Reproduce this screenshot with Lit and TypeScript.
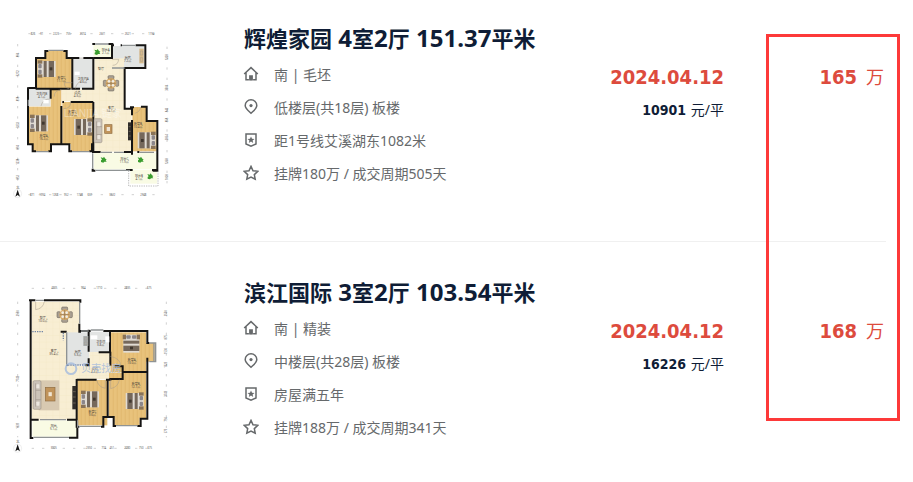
import { LitElement, html, svg, css } from "lit";
import { customElement, property } from "lit/decorators.js";

interface Listing {
  title: string;
  details: string[];
  date: string;
  unitPrice: string;
  price: string;
  plan: "large" | "small";
}

const listings: Listing[] = [
  {
    title: "辉煌家园 4室2厅 151.37平米",
    details: ["南 | 毛坯", "低楼层(共18层) 板楼", "距1号线艾溪湖东1082米", "挂牌180万 / 成交周期505天"],
    date: "2024.04.12",
    unitPrice: "10901",
    price: "165",
    plan: "large",
  },
  {
    title: "滨江国际 3室2厅 103.54平米",
    details: ["南 | 精装", "中楼层(共28层) 板楼", "房屋满五年", "挂牌188万 / 成交周期341天"],
    date: "2024.04.12",
    unitPrice: "16226",
    price: "168",
    plan: "small",
  },
];

/* Row icons, in order: house, pin, badge, star */
const icons = [
  svg`<path d="M1.2 8 8 1.6 14.8 8M3 6.8V13.8H5.9M13 6.8V13.8H10.1"/><path d="M6.7 14.4V9.8H9.3V14.4" stroke-width="1.2"/><path d="M8 10V14.4" stroke-width="2"/>`,
  svg`<path d="M8 14.3C5 11.4 2.2 9.3 2.2 6.4a5.8 5.6 0 0 1 11.6 0C13.8 9.3 11 11.4 8 14.3Z"/><circle cx="8" cy="6.6" r="1.6" fill="currentColor" stroke="none"/>`,
  svg`<path d="M3 2H13V12L8 14.2 3 12Z"/><path d="M8 4.4 9 6.7 11.5 6.9 9.6 8.5 10.2 11 8 9.6 5.8 11 6.4 8.5 4.5 6.9 7 6.7Z" fill="currentColor" stroke="none"/>`,
  svg`<path d="M8 1.4 10 5.7 14.8 6.3 11.3 9.6 12.2 14.2 8 12 3.8 14.2 4.7 9.6 1.2 6.3 6 5.7Z"/>`,
];

/* Floor-plan drawing pieces */
const rect = (x: number, y: number, w: number, h: number, c: string) =>
  svg`<rect class=${c} x=${x} y=${y} width=${w} height=${h}/>`;

const label = (x: number, y: number, name: string, area: string) => svg`
  <text class="label" x=${x} y=${y}>${name}</text>
  <text class="label" x=${x} y=${y + 9}>${area}</text>`;

const bed = (x: number, y: number, turn = 0) => svg`
  <g transform="translate(${x} ${y}) rotate(${turn})">
    <rect x="-27" y="-24" width="54" height="48" fill="#e0dbd3"/>
    <rect x="-27" y="-26" width="14" height="10" fill="#8a7357"/>
    <rect x="-27" y="16" width="14" height="10" fill="#8a7357"/>
    <rect x="-25" y="-15" width="10" height="13" rx="3" fill="#8b868a"/>
    <rect x="-25" y="2" width="10" height="13" rx="3" fill="#8b868a"/>
    <rect x="-9" y="-24" width="9" height="48" fill="#75685b"/>
    <rect x="6" y="-24" width="16" height="48" fill="#75685b"/>
    <rect x="9" y="-5" width="8" height="9" fill="#3f372f"/>
  </g>`;

const table = (x: number, y: number) => svg`
  <g transform="translate(${x} ${y})">
    ${[0, 90, 180, 270].map(
      (a) => svg`<rect transform="rotate(${a})" x="-9" y="-23" width="18" height="10" rx="3" fill="#aaa092" stroke="#5a554c" stroke-width="1.5"/>`,
    )}
    <circle r="16" fill="#d6aa69"/>
    <path d="M-14 0H14M0-14V14" stroke="#8f7656" stroke-width="2"/>
    <circle cx="-6" cy="-6" r="4" fill="#f1ede4"/><circle cx="6" cy="-6" r="4" fill="#f1ede4"/>
    <circle cx="-6" cy="6" r="4" fill="#f1ede4"/><circle cx="6" cy="6" r="4" fill="#f1ede4"/>
  </g>`;

const sofa = (x: number, y: number, h: number) => svg`
  <g transform="translate(${x} ${y})">
    <rect width="24" height=${h} rx="4" fill="#cbc3b8" stroke="#91877b" stroke-width="1.5"/>
    <path d="M8 8V${h - 8}M8 ${h / 3}H23M8 ${(h * 2) / 3}H23" stroke="#8d8378" stroke-width="1.5"/>
    <rect x="10" y="11" width="9" height="12" rx="2" fill="#ebe6de"/>
    <rect x="10" y=${h - 23} width="9" height="12" rx="2" fill="#ebe6de"/>
  </g>`;

const coffee = (x: number, y: number, w: number, h: number) => svg`
  <rect x=${x} y=${y} width=${w} height=${h} fill="#c0935a" stroke="#8f6d42" stroke-width="2"/>
  <rect x=${x + w / 2 - 5} y=${y + h / 2 - 6} width="10" height="12" fill="#f0e5d2"/>`;

const plant = (x: number, y: number) => svg`
  <path fill="#399c2e" transform="translate(${x} ${y})" d="M-9-7-2-5 1-9 5-3 9-1 6 2 9 6 2 6-1 9-8 7-8 2-5 0Z"/>`;

const compass = (y: number) => svg`
  <circle cx="53" cy=${y} r="12" fill="none" stroke="#dcdcdc" stroke-width="1.5"/>
  <path d="M53 ${y - 12} 60 ${y + 9} 53 ${y + 4} 46 ${y + 9}Z" fill="#151515"/>
  <text class="label" x="53" y=${y - 15}>北</text>`;

const across = (y: number, marks: [number, string][], from: number, to: number) => svg`
  <path class="rule" d="M${from} ${y}H${to}"/>
  ${marks.map(([x, t]) => svg`<text class="size" x=${x} y=${y + 3}>${t}</text>`)}`;

const down = (x: number, marks: [number, string][], from: number, to: number) => svg`
  <path class="rule" d="M${x} ${from}V${to}"/>
  ${marks.map(([y, t]) => svg`<text class="size" transform="translate(${x + 3} ${y}) rotate(-90)">${t}</text>`)}`;

const defs = svg`
  <defs>
    <pattern id="planks" width="24" height="60" patternUnits="userSpaceOnUse">
      <rect width="24" height="60" fill="#e8c27b"/>
      <path d="M4 0V60M16 0V60" stroke="#e3bb72" stroke-width="4"/>
    </pattern>
    <pattern id="tiles" width="20" height="20" patternUnits="userSpaceOnUse">
      <rect width="20" height="20" fill="#f8eed3"/>
      <path d="M0 0H20V20" fill="none" stroke="#f3e6c6" stroke-width="2"/>
    </pattern>
  </defs>`;

const largePlan = html`
  <svg class="plan" viewBox="0 0 570 570" role="img" aria-label="四室两厅户型图">
    ${defs}
    ${across(41, [[99, "826"], [125, "91"], [168, "2223"], [205, "755"], [248, "2074"], [307, "2221"], [383, "2621"], [454, "1194"]], 85, 470)}
    ${across(524, [[97, "871"], [127, "1994"], [166, "1268"], [199, "952"], [239, "1748"], [269, "637"], [337, "3622"], [430, "2748"]], 85, 470)}
    ${down(53, [[105, "894"], [160, "3272"], [237, "898"], [315, "3232"], [382, "894"], [425, "1238"], [472, "852"]], 72, 495)}
    ${down(501, [[112, "1228"], [203, "3504"], [270, "842"], [300, "858"], [352, "2864"], [424, "1268"], [472, "1008"]], 80, 495)}
    ${compass(521)}
    ${rect(110, 116, 107, 90, "wood")}${rect(137, 92, 62, 26, "wood")}
    ${rect(220, 115, 60, 92, "bath")}
    ${rect(280, 75, 56, 40, "balcony")}
    ${rect(338, 78, 94, 66, "bath")}
    ${rect(283, 115, 89, 280, "tile")}${rect(370, 267, 25, 128, "tile")}${rect(185, 208, 100, 36, "tile")}
    ${rect(87, 207, 64, 52, "bath")}
    ${rect(87, 260, 96, 112, "wood")}${rect(152, 208, 32, 54, "wood")}${rect(99, 370, 54, 24, "wood")}
    ${rect(187, 246, 93, 126, "wood")}${rect(212, 370, 62, 24, "wood")}
    ${rect(397, 302, 73, 92, "wood")}${rect(397, 261, 42, 42, "wood")}
    ${rect(281, 398, 190, 50, "balcony")}${rect(391, 450, 80, 41, "balcony")}
    <path class="wall" d="M108 208V114H136V93H145M190 93H200V114H238M250 114H280M217 114V206H240M108 206H212M85 204H108M84 202V373H98V394H108M145 394H153V373H208V394H216M268 394H276V373H281M152 206V236M153 208H180M184 258V373M187 246H192M212 246H280M280 112V206H246M280 246V398M277 72H285M325 72H340M336 74V114H281M336 76H342M362 76H366M407 76H436V144H374V266H396V286M390 262H402M423 260H440V303H472V452H458M396 300V396M276 396H302M372 396H396V404M412 396H418M278 446V452H286M378 450H398M456 450H473"/>
    <path class="window" d="M145 91H190M85 239V258M108 395H145M216 395H268M285 72H325M366 76H407M278 400V446M286 451H390M302 397H336M342 397H372M418 397H462M336 144H374"/>
    <path class="thin" d="M238 114H250M217 188H193Q192 204 208 206M246 182Q229 188 226 206M123 258Q128 236 151 237M163 230Q162 210 184 210M212 246Q213 266 190 266M336 118H356Q354 136 338 136M404 280Q421 276 422 260"/>
    <path class="dashed" d="M386 452V498H474V454"/>
    ${bed(140, 147)}${bed(117, 310)}${bed(249, 321, 180)}${bed(440, 361, 180)}
    ${table(333, 190)}${sofa(282, 296, 72)}${coffee(314, 314, 22, 26)}
    <rect x="384" y="307" width="10" height="54" fill="#302d2a"/>
    <path d="M386 320H392M386 334H392M386 348H392" stroke="#827566" stroke-width="2"/>
    <rect x="418" y="86" width="13" height="44" fill="#d6ba8b"/>
    <path d="M421 93H428V105H421ZM421 113H428V124H421Z" class="thin"/>
    <rect x="224" y="155" width="15" height="10" fill="#fff"/><rect x="130" y="240" width="16" height="10" fill="#fff"/>
    ${plant(292, 96)}${plant(311, 419)}${plant(422, 419)}${plant(451, 469)}
    ${label(184, 178, "卧室C", "11.1㎡")}${label(250, 181, "卫生间A", "4.6㎡")}
    ${label(317, 92, "阳台A", "2.1㎡")}${label(383, 116, "厨房", "7.2㎡")}
    ${label(303, 149, "餐厅", "")}${label(333, 267, "客厅", "34.1㎡")}
    ${label(232, 222, "过道", "4.3㎡")}${label(125, 226, "卫生间B", "4.1㎡")}
    ${label(217, 278, "卧室D", "13.2㎡")}${label(131, 350, "卧室A", "16.2㎡")}
    ${label(414, 316, "卧室B", "10.4㎡")}${label(373, 420, "阳台C", "11.9㎡")}${label(417, 472, "阳台B", "4.1㎡")}
    <text class="mark pale" x="278" y="292">LIANJIA.链家</text>
  </svg>`;

const smallPlan = html`
  <svg class="plan" viewBox="0 -3 570 570" role="img" aria-label="三室两厅户型图">
    ${defs}
    ${across(40, [[163, "4905"], [250, "964"], [298, "1710"], [382, "2835"], [448, "675"]], 95, 462)}
    ${across(520, [[161, "3905"], [267, "2350"], [311, "774"], [335, "451"], [382, "2080"], [424, "750"], [449, "675"]], 95, 462)}
    ${down(53, [[115, "2550"], [311, "7743"], [452, "1639"]], 80, 487)}
    ${down(499, [[115, "2550"], [187, "875"], [228, "1530"], [269, "1323"], [356, "3743"], [433, "750"], [468, "675"]], 80, 487)}
    ${compass(520)}
    ${rect(95, 80, 142, 92, "tile")}${rect(95, 168, 138, 266, "tile")}
    ${rect(200, 172, 67, 99, "bath")}${rect(268, 170, 62, 61, "bath")}
    ${rect(268, 231, 62, 80, "tile")}${rect(228, 273, 138, 40, "tile")}
    ${rect(332, 172, 106, 119, "wood")}${rect(437, 204, 27, 56, "wood")}
    ${rect(327, 293, 111, 136, "wood")}${rect(343, 427, 76, 24, "wood")}
    ${rect(232, 315, 90, 136, "wood")}${rect(97, 436, 134, 49, "balcony")}
    <path class="wall" d="M87 76H106M132 76H241V83M92 74V489H100M238 146V170H243M182 170H200M236 168H272M266 164V230M198 270H204M266 250V271H256M310 168H330V232H296M330 168H442V204H448M331 230V272M344 274H368V312H328M442 248V431H422V453H412M368 291H442M230 314H290M230 312V455H238M323 314V426H341V453H348M318 314H334M303 455H310V426H323M94 434H116M201 434H232M232 452V488H207"/>
    <path class="window" d="M106 76H132M239 83V146M272 165H310M243 168H266M448 204H467V260H448M462 204V260M348 452H412M238 454H303M233 436V458M100 487H207M120 434H198M200 172V270"/>
    <path class="dots" d="M97 170H132M190 174V196M204 270H256"/>
    <path class="thin" d="M107 80V104Q129 101 133 80M331 244Q362 250 362 273M290 314Q294 336 316 340V314M332 314V341Q355 336 358 314"/>
    ${bed(394, 206, 90)}${bed(404, 378, 180)}${bed(270, 373)}
    ${table(194, 119)}
    <rect x="116" y="316" width="62" height="90" fill="#d8c9b1"/>
    ${sofa(99, 317, 86)}${coffee(136, 337, 29, 41)}
    <rect x="217" y="333" width="12" height="70" fill="#302d2a"/>
    <path d="M219 350H227M219 366H227M219 384H227" stroke="#827566" stroke-width="2"/>
    <rect x="250" y="183" width="15" height="30" fill="#a8adad"/><path d="M253 188H262V195H253ZM253 201H262V209H253Z" class="thin"/>
    <rect x="272" y="181" width="20" height="12" fill="#fff"/><rect x="316" y="184" width="12" height="18" fill="#fff"/>
    ${label(128, 131, "餐厅", "10.0㎡")}${label(161, 231, "客厅", "35.4㎡")}
    ${label(233, 234, "厨房", "5.3㎡")}${label(302, 205, "卫生间", "3.8㎡")}
    ${label(284, 285, "过道", "4.2㎡")}${label(395, 259, "卧室A", "13.0㎡")}
    ${label(407, 329, "卧室B", "12.7㎡")}${label(277, 413, "卧室C", "9.6㎡")}${label(161, 457, "阳台", "5.1㎡")}
    <circle cx="213" cy="281" r="16" fill="none" stroke="#a8bddd" stroke-width="6" opacity="0.85"/>
    <text class="mark blue" x="304" y="292">贝壳找房</text>
  </svg>`;

/* Titles set their figures a step larger than the Chinese text */
const mixed = (text: string) =>
  text
    .split(/([ \d.]+)/)
    .filter(Boolean)
    .map((part) => (/^[ \d.]+$/.test(part) ? html`<span class="figure">${part}</span>` : part));

@customElement("deal-item")
class DealItem extends LitElement {
  @property({ attribute: false }) listing!: Listing;

  static styles = css`
    :host {
      display: grid;
      grid-template-columns: 244px minmax(210px, 1fr) 160px 162px;
      padding-bottom: 31px;
    }
    .plan {
      display: block;
      width: 190px;
      height: 190px;
    }
    .wood { fill: url(#planks); }
    .tile { fill: url(#tiles); }
    .bath { fill: #e2e4e3; }
    .balcony { fill: #f9fbe4; }
    .wall { fill: none; stroke: #151413; stroke-width: 6; }
    .window { fill: none; stroke: #8f9394; stroke-width: 4; }
    .thin { fill: none; stroke: #a49b8d; stroke-width: 1.5; }
    .dashed { fill: none; stroke: #9c9c9c; stroke-width: 2; stroke-dasharray: 4 3; }
    .dots { fill: none; stroke: #7185a5; stroke-width: 4; stroke-dasharray: 4 3; }
    .rule { fill: none; stroke: #b9b9b9; stroke-width: 2; stroke-dasharray: 7 24; }
    .label, .size, .mark {
      font-family: "Noto Sans", "Noto Sans CJK SC", sans-serif;
      text-anchor: middle;
    }
    .label { font-size: 9px; fill: #4c463b; }
    .size { font-size: 8px; fill: #555; }
    .mark { font-size: 30px; }
    .pale { fill: #fff; opacity: 0.4; }
    .blue { fill: #a8bddd; opacity: 0.85; }

    .title {
      margin: 0;
      font-size: 22px;
      line-height: 37px;
      font-weight: 700;
      white-space: nowrap;
    }
    .title a {
      color: #0f1d36;
      text-decoration: none;
    }
    .figure { font-size: 24px; line-height: 1; }
    .details {
      list-style: none;
      margin: 0;
      padding: 0;
    }
    .detail {
      display: flex;
      align-items: center;
      gap: 15px;
      height: 33px;
      font-size: 14px;
      color: #66696b;
      white-space: nowrap;
    }
    .icon {
      width: 16px;
      height: 16px;
      margin-left: -1px;
      fill: none;
      stroke: currentColor;
      stroke-width: 1.5;
    }
    .deal, .total {
      margin: 0;
      padding-top: 40px;
      text-align: right;
      white-space: nowrap;
    }
    .total { padding-right: 2px; }
    .date, .amount {
      font: 700 20px/34px "DejaVu Sans Condensed", "DejaVu Sans", sans-serif;
      font-stretch: condensed;
      color: #dd4b3d;
    }
    .date { display: block; }
    .unit {
      font-size: 14px;
      line-height: 32px;
      color: #0f1d36;
    }
    .unit b {
      margin-right: 1px;
      font-family: "DejaVu Sans Condensed", "DejaVu Sans", sans-serif;
      font-stretch: condensed;
    }
    .wan {
      margin-left: 9px;
      font-size: 18px;
      line-height: 34px;
      color: #dd4b3d;
    }
  `;

  render() {
    const { title, details, date, unitPrice, price, plan } = this.listing;
    return html`
      ${plan === "large" ? largePlan : smallPlan}
      <div>
        <h2 class="title"><a href="#">${mixed(title)}</a></h2>
        <ul class="details">
          ${details.map(
            (text, i) => html`<li class="detail"><svg class="icon" viewBox="0 0 16 16" aria-hidden="true">${icons[i]}</svg><span>${text}</span></li>`,
          )}
        </ul>
      </div>
      <div class="deal">
        <time class="date">${date}</time>
        <span class="unit"><b>${unitPrice}</b> 元/平</span>
      </div>
      <p class="total"><span class="amount">${price}</span><span class="wan">万</span></p>
    `;
  }
}

@customElement("app-root")
class AppRoot extends LitElement {
  static styles = css`
    :host {
      display: block;
      position: relative;
      background: #fff;
      font-family: "Noto Sans", "Noto Sans CJK SC", sans-serif;
    }
    .list {
      list-style: none;
      margin: 0;
      padding: 20px 27px 0 0;
    }
    .row + .row {
      border-top: 1px solid #f0f0f0;
      padding-top: 32px;
    }
    .highlight {
      position: absolute;
      inset: 34px 13px 74px auto;
      width: 134px;
      box-sizing: border-box;
      border: 3px solid #fd3939;
      pointer-events: none;
    }
  `;

  render() {
    return html`
      <ul class="list">
        ${listings.map((item) => html`<li class="row"><deal-item .listing=${item}></deal-item></li>`)}
      </ul>
      <div class="highlight" aria-hidden="true"></div>
    `;
  }
}
